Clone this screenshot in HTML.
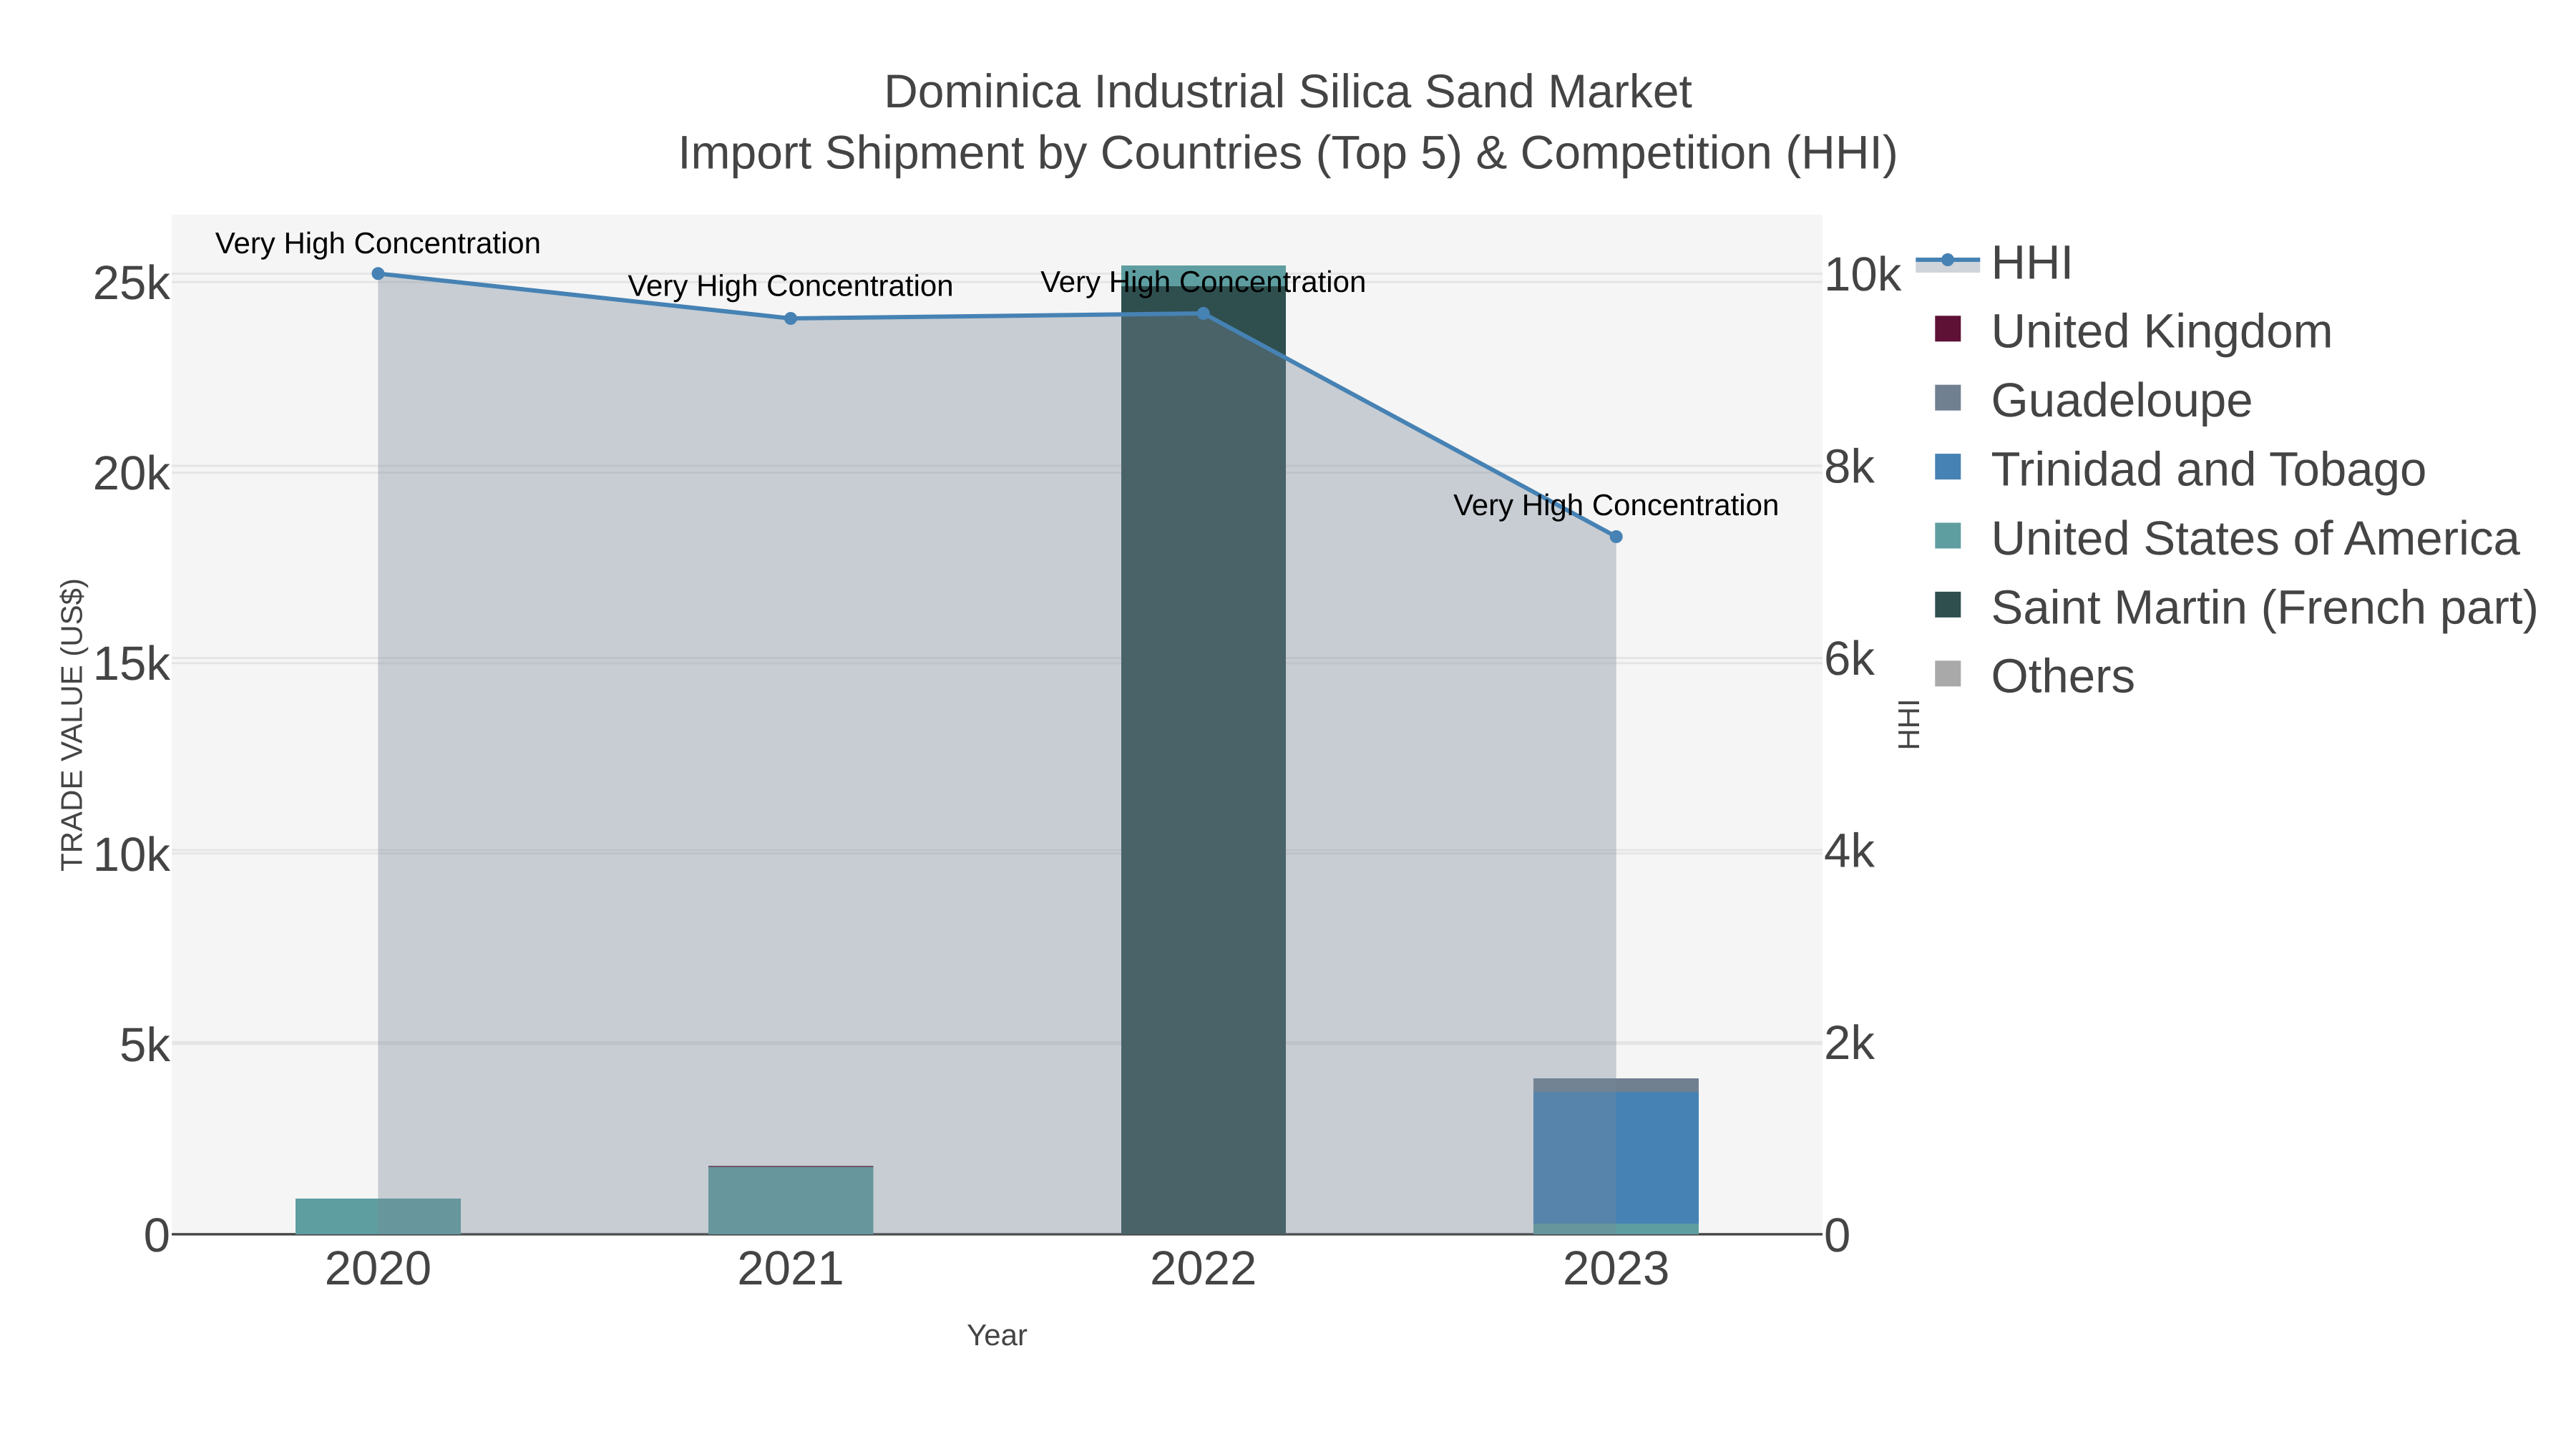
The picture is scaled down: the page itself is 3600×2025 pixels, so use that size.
<!DOCTYPE html>
<html lang="en">
<head>
<meta charset="utf-8">
<title>Dominica Industrial Silica Sand Market</title>
<style>
html,body{margin:0;padding:0;background:#fff;width:3600px;height:2025px;overflow:hidden}
svg{display:block}
text{font-family:"Liberation Sans",Arial,sans-serif;text-rendering:geometricPrecision;fill:#444}
.tick{font-size:67.2px}
.leg{font-size:67.2px}
.ann{font-size:42px;fill:#000;text-anchor:middle}
.axt{font-size:42px}
.ttl{font-size:66px;text-anchor:middle}
</style>
</head>
<body>
<svg width="3600" height="2025" viewBox="0 0 3600 2025" xmlns="http://www.w3.org/2000/svg">
<rect width="3600" height="2025" fill="#fff"/>
<rect x="240" y="300" width="2307" height="1425" fill="#f5f5f5"/>

<!-- grid -->
<g stroke="#e5e5e5" stroke-width="3">
<path d="M240 1458.9H2547M240 1192.8H2547M240 926.7H2547M240 660.6H2547M240 394.3H2547"/>
<path d="M240 1456.5H2547M240 1188H2547M240 919.5H2547M240 651H2547M240 382.5H2547"/>
</g>
<rect x="240" y="1723.2" width="2307" height="3.4" fill="#444"/>

<!-- bars -->
<rect x="413" y="1675" width="231" height="50" fill="#5f9ea0"/>
<rect x="990" y="1629.4" width="230.5" height="1.6" fill="#5e1135"/>
<rect x="990" y="1631" width="230.5" height="94" fill="#5f9ea0"/>
<rect x="1567" y="371" width="230" height="29" fill="#5f9ea0"/>
<rect x="1567" y="400" width="230" height="1325" fill="#2f4f4f"/>
<rect x="2143" y="1507" width="231" height="19" fill="#708090"/>
<rect x="2143" y="1526" width="231" height="184" fill="#4682b4"/>
<rect x="2143" y="1710" width="231" height="15" fill="#5f9ea0"/>

<!-- HHI area -->
<path d="M528.4 382.3L1105 445L1681.7 438L2258.7 750V1725H528.4Z" fill="#778899" fill-opacity=".36"/>
<!-- HHI line -->
<path d="M528.4 382.3L1105 445L1681.7 438L2258.7 750" fill="none" stroke="#4682b4" stroke-width="6"/>
<g fill="#4682b4">
<circle cx="528.4" cy="382.3" r="9"/>
<circle cx="1105" cy="445" r="9"/>
<circle cx="1681.7" cy="438" r="9"/>
<circle cx="2258.7" cy="750" r="9"/>
</g>

<!-- annotations -->
<text class="ann" x="528.4" y="354">Very High Concentration</text>
<text class="ann" x="1105" y="413.3">Very High Concentration</text>
<text class="ann" x="1681.7" y="408">Very High Concentration</text>
<text class="ann" x="2258.7" y="720">Very High Concentration</text>

<!-- title -->
<text class="ttl" x="1800" y="150">Dominica Industrial Silica Sand Market</text>
<text class="ttl" x="1800" y="235.5">Import Shipment by Countries (Top 5) &amp; Competition (HHI)</text>

<!-- left ticks -->
<g class="tick" text-anchor="end">
<text x="238" y="1749">0</text>
<text x="238" y="1483">5k</text>
<text x="238" y="1217">10k</text>
<text x="238" y="950">15k</text>
<text x="238" y="684">20k</text>
<text x="238" y="418">25k</text>
</g>
<!-- right ticks -->
<g class="tick">
<text x="2549" y="1749">0</text>
<text x="2549" y="1480">2k</text>
<text x="2549" y="1211.5">4k</text>
<text x="2549" y="943">6k</text>
<text x="2549" y="674.5">8k</text>
<text x="2549" y="406">10k</text>
</g>
<!-- x ticks -->
<g class="tick" text-anchor="middle">
<text x="528.4" y="1795">2020</text>
<text x="1105" y="1795">2021</text>
<text x="1681.7" y="1795">2022</text>
<text x="2258.7" y="1795">2023</text>
</g>

<!-- axis titles -->
<text class="axt" text-anchor="middle" transform="translate(114.3 1013) rotate(-90)">TRADE VALUE (US$)</text>
<text class="axt" text-anchor="middle" transform="translate(2682 1012.5) rotate(-90)">HHI</text>
<text class="axt" text-anchor="middle" x="1393.5" y="1880">Year</text>

<!-- legend -->
<rect x="2677.3" y="363" width="90" height="18" fill="#778899" fill-opacity=".36"/>
<rect x="2677.3" y="360" width="90" height="6" fill="#4682b4"/>
<circle cx="2722" cy="363" r="9" fill="#4682b4"/>
<rect x="2704.3" y="441.3" width="36" height="36" fill="#5e1135"/>
<rect x="2704.3" y="537.7" width="36" height="36" fill="#708090"/>
<rect x="2704.3" y="634.1" width="36" height="36" fill="#4682b4"/>
<rect x="2704.3" y="730.5" width="36" height="36" fill="#5f9ea0"/>
<rect x="2704.3" y="826.9" width="36" height="36" fill="#2f4f4f"/>
<rect x="2704.3" y="923.3" width="36" height="36" fill="#a9a9a9"/>
<g class="leg">
<text x="2782.5" y="389.3">HHI</text>
<text x="2782.5" y="485.7">United Kingdom</text>
<text x="2782.5" y="582.1">Guadeloupe</text>
<text x="2782.5" y="678.5">Trinidad and Tobago</text>
<text x="2782.5" y="774.9">United States of America</text>
<text x="2782.5" y="871.3">Saint Martin (French part)</text>
<text x="2782.5" y="967.7">Others</text>
</g>
</svg>
</body>
</html>
